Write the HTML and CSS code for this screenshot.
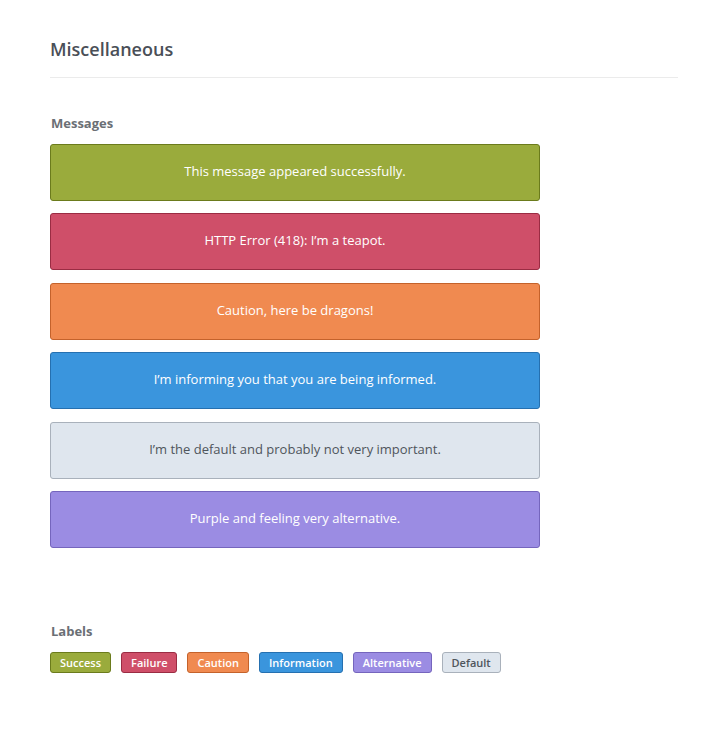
FILE: index.html
```html
<!DOCTYPE html>
<html>
<head>
<meta charset="utf-8">
<link rel="stylesheet" href="styles.css">
</head>
<body>
<div class="page">
  <h1 class="title">Miscellaneous</h1>
  <section class="section">
    <h2 class="sub">Messages</h2>
    <div class="messages">
      <div class="msg success">This message appeared successfully.</div>
      <div class="msg failure">HTTP Error (418): I’m a teapot.</div>
      <div class="msg caution">Caution, here be dragons!</div>
      <div class="msg info">I’m informing you that you are being informed.</div>
      <div class="msg default">I’m the default and probably not very important.</div>
      <div class="msg alt">Purple and feeling very alternative.</div>
    </div>
  </section>
  <section class="section labels-section">
    <h2 class="sub">Labels</h2>
    <div class="labels">
      <span class="label success">Success</span>
      <span class="label failure">Failure</span>
      <span class="label caution">Caution</span>
      <span class="label info">Information</span>
      <span class="label alt">Alternative</span>
      <span class="label default">Default</span>
    </div>
  </section>
</div>
</body>
</html>
```
FILE: styles.css
```css
html, body { margin: 0; padding: 0; background: #fff; }
body { font-family: "Open Sans", "Liberation Sans", sans-serif; color: #555; }
.page { padding: 36px 50px 0 50px; width: 628px; }
.title {
  margin: 0; font-size: 18px; font-weight: 600; color: #4a4f57;
  line-height: 26px; padding-bottom: 15px; border-bottom: 1px solid #ebebeb;
}
.section { margin-top: 36px; }
.sub { margin: 0 0 12px 1px; font-size: 13px; font-weight: 700; color: #6b6f75; line-height: 18px; }
.messages { display: flex; flex-direction: column; gap: 12.4px; width: 490px; }
.msg {
  box-sizing: border-box; height: 57px; border-width: 1px; border-style: solid; border-radius: 3px;
  display: flex; align-items: center; justify-content: center;
  font-size: 13px; color: #fff; padding-bottom: 3px;
}
.labels-section { margin-top: 74px; }
.labels { display: flex; gap: 10px; }
.label {
  box-sizing: border-box; height: 21px; padding: 0 9px; border-width: 1px; border-style: solid;
  border-radius: 3px; font-size: 11px; font-weight: 600; color: #fff;
  display: flex; align-items: center;
}
.success { background: #9aab3c; border-color: #6b7b1c; }
.failure { background: #cf4f69; border-color: #9a2c43; }
.caution { background: #f08a50; border-color: #c4622b; }
.info { background: #3a95dd; border-color: #2570b0; }
.default { background: #dfe6ee; border-color: #a9b1bb; color: #4f555c; }
.alt { background: #9b8ce3; border-color: #7565bd; }
```
